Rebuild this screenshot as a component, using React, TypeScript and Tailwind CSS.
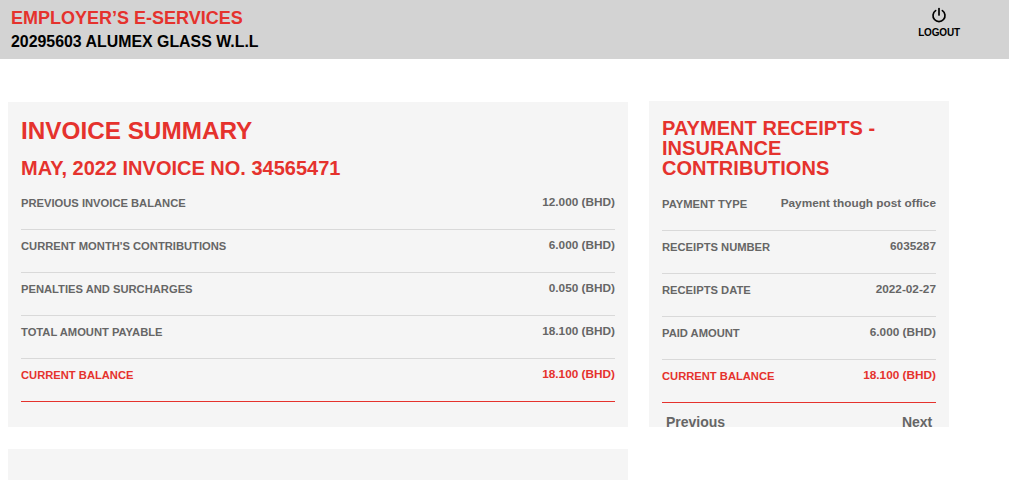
const F = "font-['Liberation_Sans',Arial,sans-serif]";

function Row({ label, value, red }: { label: string; value: string; red?: boolean }) {
  return (
    <div className={`flex items-center justify-between border-b h-[43px] pb-[10px] font-bold ${red ? "border-[#e5322d] text-[#e5322d]" : "border-[#d9d9d9] text-[#666666]"}`}>
      <span className="text-[11.2px]">{label}</span>
      <span className="text-[11.8px]">{value}</span>
    </div>
  );
}

const invoice = [
  ["PREVIOUS INVOICE BALANCE", "12.000 (BHD)"],
  ["CURRENT MONTH'S CONTRIBUTIONS", "6.000 (BHD)"],
  ["PENALTIES AND SURCHARGES", "0.050 (BHD)"],
  ["TOTAL AMOUNT PAYABLE", "18.100 (BHD)"],
];
const receipts = [
  ["PAYMENT TYPE", "Payment though post office"],
  ["RECEIPTS NUMBER", "6035287"],
  ["RECEIPTS DATE", "2022-02-27"],
  ["PAID AMOUNT", "6.000 (BHD)"],
];

export default function App() {
  return (
    <div className={`${F} h-[480px] w-[1009px] overflow-hidden bg-white`}>
      <header className="flex h-[59px] justify-between bg-[#d3d3d3] pl-[11px] pr-[49px]">
        <div className="pt-[8px]">
          <div className="text-[18px] leading-[21px] font-bold text-[#e5322d]">EMPLOYER’S E-SERVICES</div>
          <div className="mt-[3px] text-[15.9px] leading-[20px] font-bold text-black">20295603 ALUMEX GLASS W.L.L</div>
        </div>
        <div className="flex flex-col items-center pt-[7px] text-black">
          <svg width="16" height="16" viewBox="0 0 16 16" fill="none" stroke="currentColor" strokeWidth="1.7" strokeLinecap="round">
            <path d="M8 1.5V8" />
            <path d="M4.6 3.6a6 6 0 1 0 6.8 0" />
          </svg>
          <span className="mt-[4px] text-[10px] leading-[12px] font-semibold tracking-[-0.15px]">LOGOUT</span>
        </div>
      </header>

      <div className="flex items-start pl-[8px]">
        <div className="w-[620px]">
          <section className="mt-[43px] h-[325px] bg-[#f5f5f5] px-[13px] pt-[15px]">
            <h1 className="text-[24.3px] leading-[28px] font-bold text-[#e5322d]">INVOICE SUMMARY</h1>
            <h2 className="mt-[11px] text-[20px] leading-[24px] font-bold text-[#e5322d]">MAY, 2022 INVOICE NO. 34565471</h2>
            <div className="mt-[7px]">
              {invoice.map(([l, v]) => (
                <Row key={l} label={l} value={v} />
              ))}
              <Row label="CURRENT BALANCE" value="18.100 (BHD)" red />
            </div>
          </section>
          <section className="mt-[22px] h-[60px] bg-[#f5f5f5]" />
        </div>

        <section className="mt-[42px] ml-[21px] h-[326px] w-[300px] bg-[#f5f5f5] px-[13px] pt-[17px]">
          <h2 className="text-[20px] leading-[20px] font-bold tracking-[0.05px] text-[#e5322d]">
            PAYMENT RECEIPTS - INSURANCE CONTRIBUTIONS
          </h2>
          <div className="mt-[10px]">
            {receipts.map(([l, v]) => (
              <Row key={l} label={l} value={v} />
            ))}
            <Row label="CURRENT BALANCE" value="18.100 (BHD)" red />
          </div>
          <div className="mt-[11px] flex justify-between px-[4px] text-[14px] leading-[16px] font-bold text-[#666666]">
            <span>Previous</span>
            <span className="pl-[1px] tracking-[-0.1px]">Next</span>
          </div>
        </section>
      </div>
    </div>
  );
}
